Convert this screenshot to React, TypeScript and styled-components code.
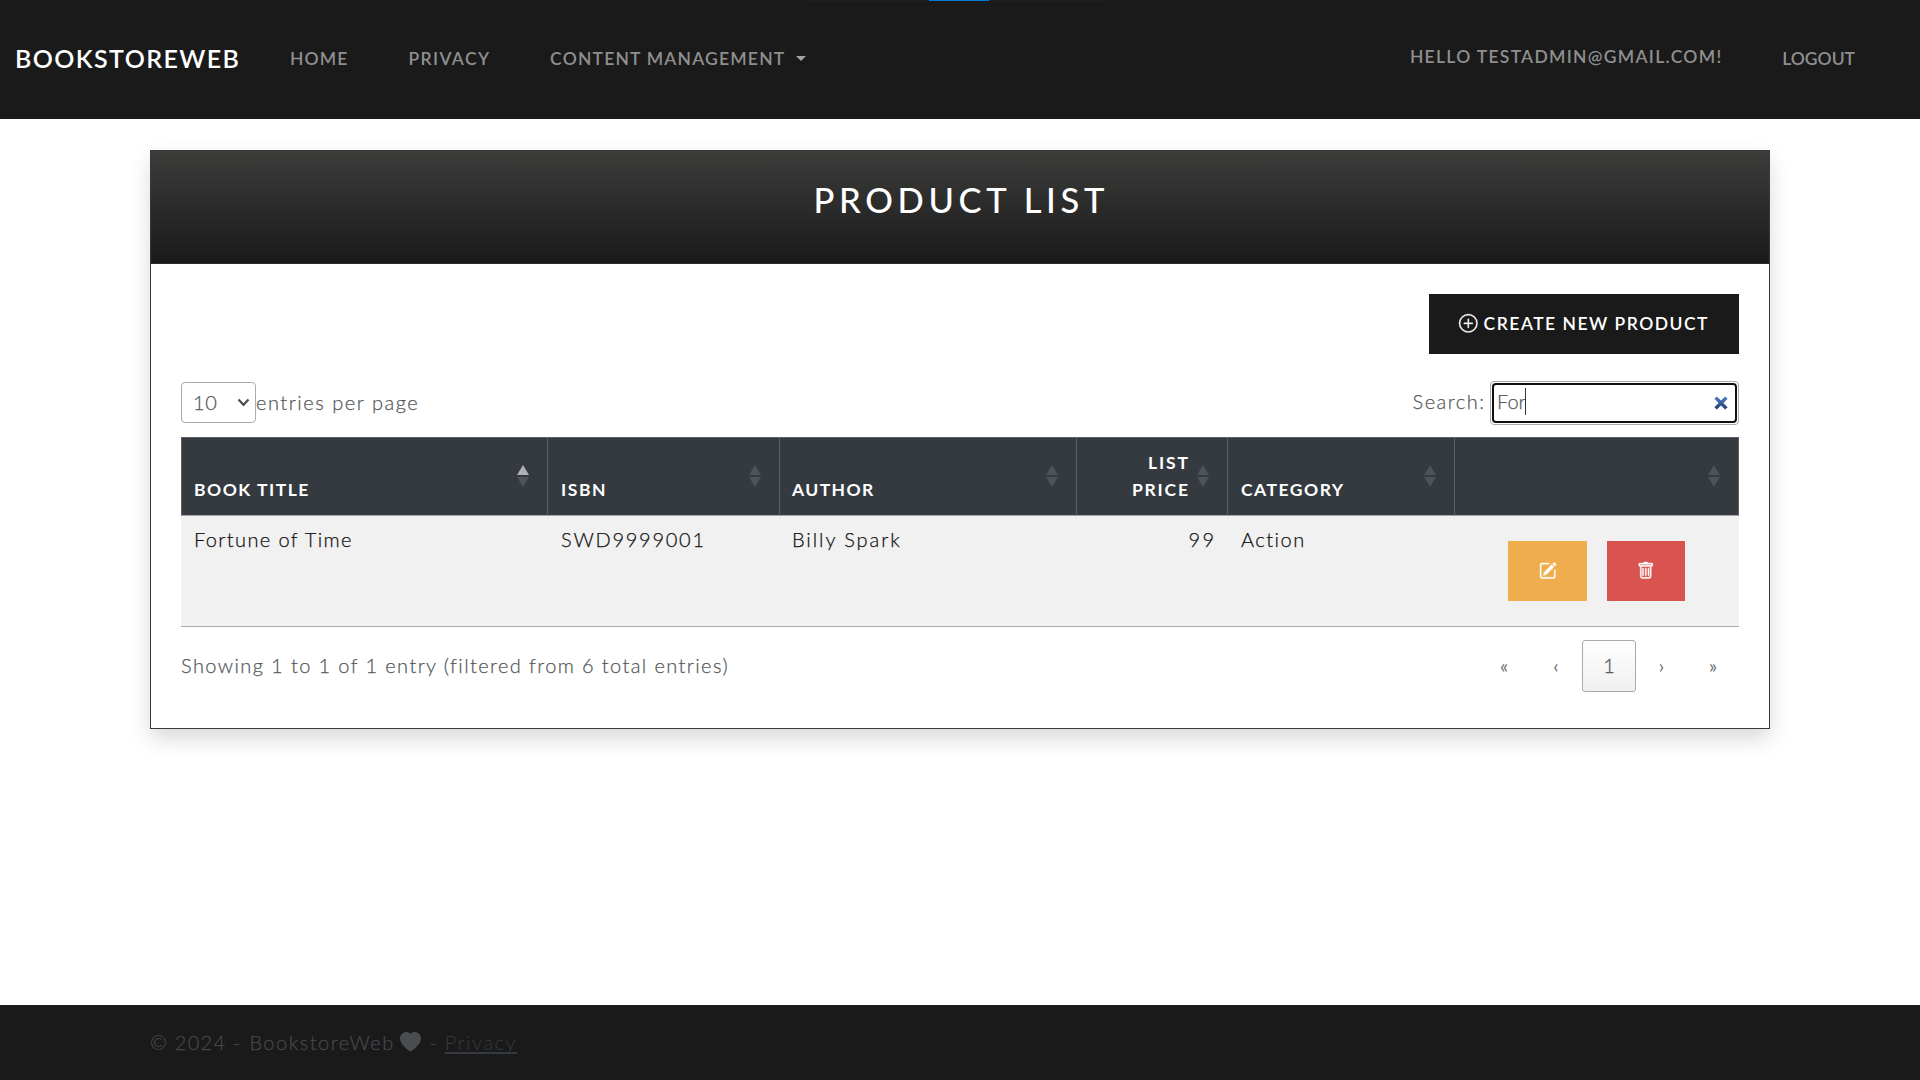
import React from "react";
import styled, { createGlobalStyle, css } from "styled-components";
import { BsTrash, BsPencilSquare, BsPlusCircle, BsHeartFill } from "react-icons/bs";

const GlobalStyle = createGlobalStyle`
  *, *::before, *::after { box-sizing: border-box; }
  body {
    margin: 0;
    background: #fff;
    color: #55595c;
    font-family: Lato, "Open Sans", sans-serif;
    font-size: 20px;
    font-weight: 300;
    line-height: 30px;
    font-kerning: normal;
    overflow: hidden;
  }
`;

const Page = styled.div`
  display: flex;
  flex-direction: column;
  width: 100%;
  height: 1080px;
`;

/* Letter spacing is tuned per label; light text gets a hairline stroke for weight. */
const Spaced = styled.span<{ $ls: number; $firm?: boolean }>`
  letter-spacing: ${(p) => p.$ls}px;
  margin-right: ${(p) => -p.$ls}px;
  white-space: nowrap;
  ${(p) => p.$firm && css`-webkit-text-stroke: 0.25px currentColor;`}
`;

/* ---------- navigation ---------- */
const Navbar = styled.header`
  position: relative;
  display: flex;
  align-items: center;
  flex: none;
  height: 119px;
  padding: 0 65px 2px 15px;
  background: #1a1a1a;
`;

const LoadingMark = styled.i`
  position: absolute;
  top: 0;
  left: 808px;
  width: 300px;
  height: 1px;
  background: linear-gradient(90deg, #1f1f1f 121px, #0078d4 121px, #0078d4 181px, #1f1f1f 181px);
`;

const Brand = styled.a`
  width: 275px;
  padding-bottom: 2px;
  color: #fff;
  font-size: 25px;
  font-weight: 600;
`;

const NavList = styled.nav`
  display: flex;
  align-items: center;
  gap: 61px;
  &:last-child { margin-left: auto; }
`;

const NavLink = styled.a<{ $raised?: boolean }>`
  display: flex;
  align-items: center;
  color: #8f8f8f;
  font-size: 17.5px;
  font-weight: 600;
  ${(p) => p.$raised && css`padding-bottom: 4px;`}
`;

const Caret = styled.i`
  margin-left: 12px;
  border: 5px solid transparent;
  border-top-color: #a3a3a3;
  border-bottom: 0;
`;

/* ---------- card ---------- */
const Card = styled.main`
  width: 1620px;
  height: 579px;
  margin: 31px auto 0;
  border: 1px solid #343a40;
  box-shadow: 0 10px 20px rgba(0, 0, 0, 0.15);
`;

const CardHeader = styled.div`
  display: flex;
  justify-content: center;
  height: 113px;
  padding: 29px 2px 0 0;
  background: linear-gradient(#3c3c3b, #1a1a1a);
  border-bottom: 1px solid #2b2b2b;
`;

const Title = styled.h1`
  margin: 0;
  color: #fff;
  font-size: 34.5px;
  font-weight: 500;
  line-height: 40px;
`;

const CardBody = styled.div`
  padding: 30px;
`;

const Actions = styled.div`
  display: flex;
  justify-content: flex-end;
`;

const CreateButton = styled.a`
  display: flex;
  align-items: center;
  width: 310px;
  height: 60px;
  padding-left: 30px;
  gap: 6px;
  background: #1a1a1a;
  color: #fff;
  font-size: 17.5px;
  font-weight: 600;
  svg { font-size: 18.6px; margin-bottom: 2px; stroke: currentColor; stroke-width: 0.3px; overflow: visible; }
`;

const Controls = styled.div`
  display: flex;
  justify-content: space-between;
  height: 83px;
  padding-top: 26px;
`;

const Group = styled.label`
  display: flex;
  align-items: center;
  height: 45px;
`;

const Select = styled.span`
  display: flex;
  align-items: center;
  justify-content: space-between;
  width: 75px;
  height: 41px;
  padding: 0 5px 2px 11px;
  border: 1px solid #aaa;
  border-radius: 4px;
  svg { width: 13px; height: 9px; margin-top: 2px; fill: none; stroke: #4c4f52; stroke-width: 2.2; }
`;

const EntriesLabel = styled.span`
  padding-bottom: 1px;
`;

const SearchLabel = styled.span`
  margin-right: 6px;
  padding-bottom: 4px;
`;

const SearchBox = styled.span`
  width: 249px;
  height: 44px;
  padding: 1px;
  border: 1px solid #aaa;
  border-radius: 4px;
`;

const SearchField = styled.span`
  display: flex;
  align-items: center;
  width: 245px;
  height: 40px;
  padding: 0 7px 3px 3px;
  border: 2px solid #101010;
  border-radius: 4px;
  svg { width: 14px; height: 14px; margin: 4px 0 0 auto; }
`;

const TextCursor = styled.i`
  width: 1px;
  height: 27px;
  margin-left: -1px;
  background: #333;
`;

/* ---------- table ---------- */
const Table = styled.table`
  width: 1558px;
  border-collapse: separate;
  border-spacing: 0;
  table-layout: fixed;
`;

const Th = styled.th<{ $w: number; $right?: boolean }>`
  position: relative;
  width: ${(p) => p.$w}px;
  height: 79px;
  padding: 0 ${(p) => (p.$right ? 39 : 37)}px 12px 13px;
  vertical-align: bottom;
  text-align: ${(p) => (p.$right ? "right" : "left")};
  background: #343a40;
  color: #fff;
  border: solid #5c6166;
  border-width: 1px 1px 1px 0;
  border-bottom-color: #a5a7a9;
  font-size: 17.5px;
  font-weight: 700;
  line-height: 26.5px;
  &:first-child { border-left-width: 1px; padding-left: 12px; }
  &:nth-child(3) { padding-left: 12px; }
`;

const SortMark = styled.span<{ $asc?: boolean }>`
  position: absolute;
  top: 27px;
  right: 18px;
  display: flex;
  flex-direction: column;
  gap: 2px;
  &::before, &::after { content: ""; border: 6px solid transparent; }
  &::before { border-top: 0; border-bottom: 10px solid ${(p) => (p.$asc ? "#aeb0b3" : "#4e5358")}; }
  &::after { border-bottom: 0; border-top: 10px solid #4e5358; }
`;

const Td = styled.td<{ $right?: boolean }>`
  height: 111px;
  padding: 8px 14px 0 13px;
  vertical-align: top;
  text-align: ${(p) => (p.$right ? "right" : "left")};
  background: #f1f1f1;
  border-bottom: 1px solid #aaa;
  color: #111;
  &:nth-child(3) { padding-left: 12px; }
`;

const RowButtons = styled.div`
  display: flex;
  gap: 20px;
  padding: 17px 0 0 40px;
`;

const IconButton = styled.button<{ $bg: string; $w: number }>`
  display: flex;
  align-items: center;
  justify-content: center;
  width: ${(p) => p.$w}px;
  height: 60px;
  padding: 0 0 1px;
  border: 0;
  background: ${(p) => p.$bg};
  color: #fff;
  font-size: 17.5px;
  svg { stroke: currentColor; stroke-width: 0.4px; overflow: visible; }
`;

const TableFooter = styled.div`
  display: flex;
  align-items: center;
  justify-content: space-between;
  padding-top: 13px;
`;

const Info = styled.div`
  padding-bottom: 3px;
`;

const Pager = styled.div`
  display: flex;
  align-items: center;
`;

const PageStep = styled.a<{ $w: number }>`
  width: ${(p) => p.$w}px;
  color: #6a6d70;
  font-weight: 400;
  font-size: 19px;
  text-align: center;
`;

const CurrentPage = styled.a`
  width: 54px;
  height: 52px;
  border: 1px solid #aaa;
  border-radius: 3px;
  background: linear-gradient(#fff, #f0f0f0);
  text-align: center;
  line-height: 48px;
  -webkit-text-stroke: 0.3px currentColor;
`;

/* ---------- footer ---------- */
const Footer = styled.footer`
  display: flex;
  align-items: center;
  height: 75px;
  margin-top: auto;
  padding: 0 150px 1px;
  background: #1a1a1a;
  color: #44484b;
  svg { margin: 0 8px 0 7px; font-size: 21px; color: #494d50; }
`;

const SiteName = styled.span`
  margin-left: 9px;
`;

const FooterLink = styled.a`
  margin-left: 8px;
  color: #343a40;
  text-decoration: underline;
  text-decoration-thickness: 2px;
  text-underline-offset: 2px;
  text-decoration-skip-ink: none;
`;

type Column = { label: string; width: number; ls: number; lines?: [string, number][] };

const columns: Column[] = [
  { label: "Book Title", width: 367, ls: 1.5 },
  { label: "ISBN", width: 232, ls: 1.6 },
  { label: "Author", width: 297, ls: 1.4 },
  { label: "List Price", width: 151, ls: 1.8, lines: [["List", 1.9], ["Price", 1.8]] },
  { label: "Category", width: 227, ls: 1.5 },
  { label: "", width: 284, ls: 0 },
];

const book: [string, number][] = [
  ["Fortune of Time", 1.38],
  ["SWD9999001", 1.73],
  ["Billy Spark", 1.93],
  ["99", 2.2],
  ["Action", 1.5],
];

export default function App() {
  return (
    <Page>
      <GlobalStyle />
      <Navbar>
        <LoadingMark />
        <Brand><Spaced $ls={1.4}>BOOKSTOREWEB</Spaced></Brand>
        <NavList>
          <NavLink><Spaced $ls={1.13}>HOME</Spaced></NavLink>
          <NavLink><Spaced $ls={1.39}>PRIVACY</Spaced></NavLink>
          <NavLink><Spaced $ls={1.2}>CONTENT MANAGEMENT</Spaced><Caret /></NavLink>
        </NavList>
        <NavList>
          <NavLink $raised><Spaced $ls={1.3}>HELLO TESTADMIN@GMAIL.COM!</Spaced></NavLink>
          <NavLink><Spaced $ls={0}>LOGOUT</Spaced></NavLink>
        </NavList>
      </Navbar>

      <Card>
        <CardHeader>
          <Title><Spaced $ls={4.65}>PRODUCT LIST</Spaced></Title>
        </CardHeader>
        <CardBody>
          <Actions>
            <CreateButton><BsPlusCircle /><Spaced $ls={1.5}>CREATE NEW PRODUCT</Spaced></CreateButton>
          </Actions>
          <Controls>
            <Group>
              <Select>
                <Spaced $ls={0.6} $firm>10</Spaced>
                <svg viewBox="0 0 13 9"><path d="M1.5 1.5 6.5 6.8 11.5 1.5" /></svg>
              </Select>
              <EntriesLabel><Spaced $ls={1.53} $firm>entries per page</Spaced></EntriesLabel>
            </Group>
            <Group>
              <SearchLabel><Spaced $ls={1.5} $firm>Search:</Spaced></SearchLabel>
              <SearchBox>
                <SearchField>
                  <Spaced $ls={0} $firm>For</Spaced>
                  <TextCursor />
                  <svg viewBox="0 0 14 14">
                    <defs>
                      <linearGradient id="clear" x1="0" y1="0" x2="0" y2="1">
                        <stop offset="0" stopColor="#4a80cc" />
                        <stop offset="1" stopColor="#1f3a6b" />
                      </linearGradient>
                    </defs>
                    <path fill="url(#clear)" d="M2.8.4 7 4.6 11.2.4l2.4 2.4L9.4 7l4.2 4.2-2.4 2.4L7 9.4l-4.2 4.2-2.4-2.4L4.6 7 .4 2.8z" />
                  </svg>
                </SearchField>
              </SearchBox>
            </Group>
          </Controls>

          <Table>
            <thead>
              <tr>
                {columns.map((c, i) => (
                  <Th key={i} $w={c.width} $right={!!c.lines}>
                    {c.lines
                      ? c.lines.map(([t, ls]) => <div key={t}><Spaced $ls={ls}>{t.toUpperCase()}</Spaced></div>)
                      : <Spaced $ls={c.ls}>{c.label.toUpperCase()}</Spaced>}
                    <SortMark $asc={i === 0} />
                  </Th>
                ))}
              </tr>
            </thead>
            <tbody>
              <tr>
                {book.map(([t, ls], i) => (
                  <Td key={t} $right={i === 3}><Spaced $ls={ls} $firm>{t}</Spaced></Td>
                ))}
                <Td>
                  <RowButtons>
                    <IconButton $bg="#f0ad4e" $w={79}><BsPencilSquare /></IconButton>
                    <IconButton $bg="#d9534f" $w={78}><BsTrash /></IconButton>
                  </RowButtons>
                </Td>
              </tr>
            </tbody>
          </Table>

          <TableFooter>
            <Info><Spaced $ls={1.4} $firm>Showing 1 to 1 of 1 entry (filtered from 6 total entries)</Spaced></Info>
            <Pager>
              <PageStep $w={52}>«</PageStep>
              <PageStep $w={52}>‹</PageStep>
              <CurrentPage>1</CurrentPage>
              <PageStep $w={51}>›</PageStep>
              <PageStep $w={52}>»</PageStep>
            </Pager>
          </TableFooter>
        </CardBody>
      </Card>

      <Footer>
        <Spaced $ls={1.27} $firm>© 2024 -</Spaced>
        <SiteName><Spaced $ls={1.5} $firm>BookstoreWeb</Spaced></SiteName>
        <BsHeartFill />
        <span>-</span>
        <FooterLink><Spaced $ls={1.5}>Privacy</Spaced></FooterLink>
      </Footer>
    </Page>
  );
}
